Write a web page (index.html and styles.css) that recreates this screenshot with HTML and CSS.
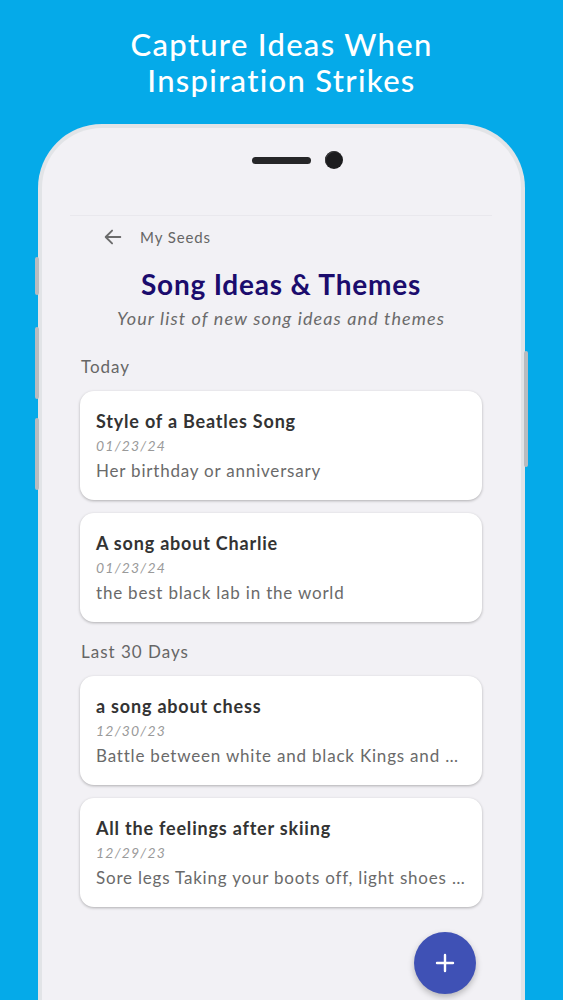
FILE: index.html
```html
<!DOCTYPE html>
<html lang="en">
<head>
<meta charset="utf-8">
<title>Song Ideas &amp; Themes</title>
<link rel="stylesheet" href="styles.css">
</head>
<body>
<div class="page">
  <h1 class="headline">Capture Ideas When<br>Inspiration Strikes</h1>
  <div class="phone">
    <span class="btn btn-l1"></span>
    <span class="btn btn-l2"></span>
    <span class="btn btn-l3"></span>
    <span class="btn btn-r1"></span>
    <div class="bezel">
      <span class="speaker"></span>
      <span class="camera"></span>
    </div>
    <div class="screen">
      <div class="nav">
        <svg class="back" width="22" height="22" viewBox="0 0 24 24" aria-hidden="true">
          <path d="M20 12H4.5M11 5l-7 7 7 7" fill="none" stroke="#6b6b6b" stroke-width="2" stroke-linecap="round" stroke-linejoin="round"/>
        </svg>
        <span class="nav-label">My Seeds</span>
      </div>
      <h2 class="title">Song Ideas &amp; Themes</h2>
      <p class="subtitle">Your list of new song ideas and themes</p>

      <div class="section-label">Today</div>
      <div class="list">
        <div class="card">
          <div class="card-title">Style of a Beatles Song</div>
          <div class="card-date">01/23/24</div>
          <div class="card-desc">Her birthday or anniversary</div>
        </div>
        <div class="card">
          <div class="card-title">A song about Charlie</div>
          <div class="card-date">01/23/24</div>
          <div class="card-desc">the best black lab in the world</div>
        </div>
      </div>

      <div class="section-label">Last 30 Days</div>
      <div class="list">
        <div class="card">
          <div class="card-title">a song about chess</div>
          <div class="card-date">12/30/23</div>
          <div class="card-desc">Battle between white and black Kings and Queens on the board</div>
        </div>
        <div class="card">
          <div class="card-title">All the feelings after skiing</div>
          <div class="card-date">12/29/23</div>
          <div class="card-desc">Sore legs Taking your boots off, light shoes and warm socks</div>
        </div>
      </div>
    </div>
    <div class="fab">
      <svg width="22" height="22" viewBox="0 0 22 22" aria-hidden="true">
        <path d="M11 3v16M3 11h16" stroke="#fff" stroke-width="2.4" stroke-linecap="round"/>
      </svg>
    </div>
  </div>
</div>
</body>
</html>
```
FILE: styles.css
```css
* { box-sizing: border-box; }
html, body {
  margin: 0;
  padding: 0;
  height: 100%;
  overflow: hidden;
}
body {
  background: #05aae9;
  font-family: Lato, "Open Sans", "Liberation Sans", sans-serif;
}
.page {
  display: flex;
  flex-direction: column;
  align-items: center;
  height: 1000px;
}
.headline {
  margin: 26px 0 0;
  color: #ffffff;
  font-weight: 500;
  font-size: 31px;
  line-height: 36px;
  text-align: center;
  letter-spacing: 1.3px;
}
.phone {
  position: relative;
  margin-top: 26px;
  width: 487px;
  height: 900px;
  flex: none;
  background: #f2f1f5;
  border: 4px solid #e2e4e7;
  border-bottom: none;
  border-radius: 64px 64px 0 0;
}
.btn {
  position: absolute;
  width: 4px;
  background: #b9bcc0;
  border-radius: 2px;
}
.btn-l1 { left: -7px; top: 129px; height: 38px; }
.btn-l2 { left: -7px; top: 199px; height: 72px; }
.btn-l3 { left: -7px; top: 290px; height: 72px; }
.btn-r1 { right: -7px; top: 223px; height: 116px; }
.bezel {
  display: flex;
  justify-content: center;
  align-items: center;
  gap: 14px;
  height: 64px;
  padding-left: 32px;
}
.speaker {
  width: 59px;
  height: 7px;
  border-radius: 4px;
  background: #262628;
}
.camera {
  width: 18px;
  height: 18px;
  border-radius: 50%;
  background: #1c1c1e;
  box-shadow: inset 1px 1px 0 #3a3a3c;
}
.screen {
  margin: 23px 29px 0 28px;
  border-top: 1px solid #e9e8ed;
  padding: 0 10px;
}
.nav {
  display: flex;
  align-items: center;
  height: 24px;
  margin-top: 9px;
  padding-left: 22px;
}
.back { flex: none; }
.nav-label {
  margin-left: 16px;
  font-size: 15px;
  letter-spacing: 0.9px;
  color: #666666;
}
.title {
  margin: 18px 0 0;
  text-align: center;
  font-size: 28px;
  line-height: 34px;
  font-weight: 700;
  letter-spacing: 0.8px;
  color: #1b0c6d;
}
.subtitle {
  margin: 5px 0 0;
  text-align: center;
  font-size: 18px;
  line-height: 24px;
  font-style: italic;
  letter-spacing: 1.1px;
  color: #6a6a6a;
}
.section-label {
  margin-top: 25px;
  font-size: 17px;
  line-height: 24px;
  letter-spacing: 1px;
  color: #666666;
  padding-left: 1px;
}
.list + .section-label { margin-top: 18px; }
.list {
  display: flex;
  flex-direction: column;
  gap: 13px;
  margin-top: 12px;
}
.card {
  background: #ffffff;
  border-radius: 14px;
  padding: 18px 16px 17px 16px;
  box-shadow: 0 1px 3px rgba(0,0,0,0.28);
}
.card-title {
  font-size: 18px;
  line-height: 24px;
  font-weight: 700;
  letter-spacing: 0.8px;
  color: #333333;
}
.card-date {
  margin-top: 2px;
  font-size: 14px;
  line-height: 22px;
  font-style: italic;
  color: #9a9a9a;
  letter-spacing: 1.2px;
}
.card-desc {
  margin-top: 2px;
  font-size: 17px;
  line-height: 24px;
  letter-spacing: 0.8px;
  color: #6a6a6a;
  white-space: nowrap;
  overflow: hidden;
  text-overflow: ellipsis;
}
.fab {
  position: absolute;
  left: 372px;
  top: 804px;
  width: 62px;
  height: 62px;
  border-radius: 50%;
  background: #3f51b5;
  display: flex;
  align-items: center;
  justify-content: center;
  box-shadow: 0 3px 6px rgba(0,0,0,0.25);
}
```
